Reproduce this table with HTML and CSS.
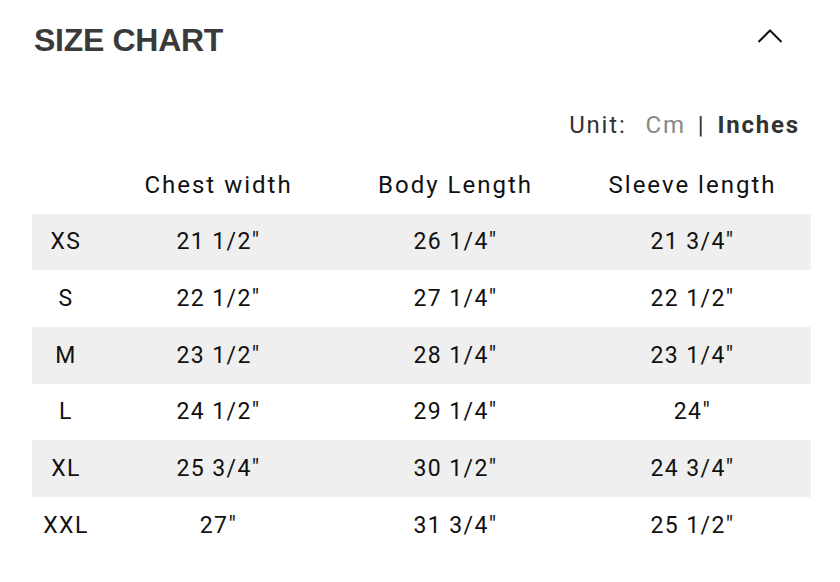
FILE: index.html
```html
<!DOCTYPE html>
<html lang="en">
<head>
<meta charset="utf-8">
<link rel="stylesheet" href="styles.css">
</head>
<body>
<section class="chart">
  <header class="chart-head">
    <h2 class="title">SIZE CHART</h2>
    <svg class="chevron" width="26" height="16" viewBox="0 0 26 16"><path d="M1.5 14 L13 2.5 L24.5 14" fill="none" stroke="#111" stroke-width="2"/></svg>
  </header>
  <div class="unit">
    <span class="unit-label">Unit:</span>
    <span class="unit-cm">Cm</span>
    <span class="unit-sep">|</span>
    <span class="unit-in">Inches</span>
  </div>
  <div class="table">
    <div class="row head"><span></span><span>Chest width</span><span>Body Length</span><span>Sleeve length</span></div>
    <div class="row alt"><span>XS</span><span>21 1/2″</span><span>26 1/4″</span><span>21 3/4″</span></div>
    <div class="row"><span>S</span><span>22 1/2″</span><span>27 1/4″</span><span>22 1/2″</span></div>
    <div class="row alt"><span>M</span><span>23 1/2″</span><span>28 1/4″</span><span>23 1/4″</span></div>
    <div class="row"><span>L</span><span>24 1/2″</span><span>29 1/4″</span><span>24″</span></div>
    <div class="row alt"><span>XL</span><span>25 3/4″</span><span>30 1/2″</span><span>24 3/4″</span></div>
    <div class="row"><span>XXL</span><span>27"</span><span>31 3/4"</span><span>25 1/2"</span></div>
  </div>
</section>
</body>
</html>
```
FILE: styles.css
```css
html, body {
  margin: 0;
  padding: 0;
  background: #fff;
}
.chart {
  width: 840px;
  height: 582px;
  padding: 0 29px 0 32px;
  box-sizing: border-box;
  font-family: Roboto, "Liberation Sans", sans-serif;
  color: #111;
}
.chart-head {
  display: flex;
  justify-content: space-between;
  align-items: center;
  height: 80px;
  padding-right: 28px;
}
.title {
  margin: 0 0 0 2px;
  font-family: "Liberation Sans", Arial, sans-serif;
  font-weight: bold;
  font-size: 32px;
  letter-spacing: -0.3px;
  color: #3a3a3a;
}
.chevron {
  display: block;
  margin-top: -8px;
}
.unit {
  display: flex;
  justify-content: flex-end;
  align-items: center;
  height: 90px;
  box-sizing: border-box;
  font-size: 24px;
  letter-spacing: 1.8px;
  padding-right: 11px;
}
.unit-label { color: #333; margin-right: 19px; }
.unit-cm { color: #888; margin-right: 12px; }
.unit-sep { color: #333; margin-right: 12px; }
.unit-in { color: #333; font-weight: bold; }
.table {
  width: 779px;
  margin-top: -13px;
}
.row {
  display: grid;
  grid-template-columns: 68px 237px 237px 237px;
  height: 56.67px;
  align-items: center;
  text-align: center;
  font-size: 23px;
  letter-spacing: 1.4px;
}
.row.head {
  font-size: 24px;
  letter-spacing: 2px;
}
.row.alt {
  background: #efefef;
}
```
